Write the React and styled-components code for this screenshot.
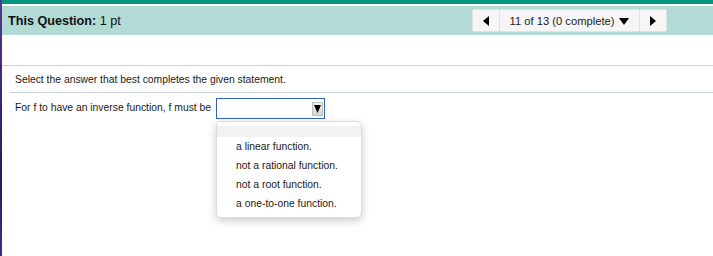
import styled, { createGlobalStyle } from "styled-components";

const GlobalStyle = createGlobalStyle`
  html, body {
    margin: 0;
    padding: 0;
    background: #ffffff;
  }
  body {
    width: 713px;
    height: 256px;
    overflow: hidden;
    font-family: "Liberation Sans", Arial, Helvetica, sans-serif;
    color: #1a1a1a;
  }
`;

const options = [
  "a linear function.",
  "not a rational function.",
  "not a root function.",
  "a one-to-one function.",
];

const Triangle = ({ dir = "down", w = 7, h = 6 }) => {
  const points = {
    down: `0,0 ${w},0 ${w / 2},${h}`,
    left: `${w},0 ${w},${h} 0,${h / 2}`,
    right: `0,0 0,${h} ${w},${h / 2}`,
  }[dir];
  return (
    <svg width={w} height={h} viewBox={`0 0 ${w} ${h}`}>
      <polygon points={points} fill="#000" />
    </svg>
  );
};

export default function App() {
  return (
    <>
      <GlobalStyle />
      <Page>
        <Strip />
        <Main>
          <TopBar />
          <Header>
            <Title>
              <b>This Question:</b> 1 pt
            </Title>
            <Nav>
              <NavButton $w={28}>
                <Triangle dir="left" w={6} h={10} />
              </NavButton>
              <NavButton $w={141} $counter>
                11 of 13 (0 complete)
                <Triangle dir="down" w={10} h={7} />
              </NavButton>
              <NavButton $w={28}>
                <Triangle dir="right" w={6} h={10} />
              </NavButton>
            </Nav>
          </Header>
          <Spacer />
          <Divider />
          <Instruction>Select the answer that best completes the given statement.</Instruction>
          <Divider $inset />
          <QuestionRow>
            <Label>For f to have an inverse function, f must be</Label>
            <SelectWrap>
              <SelectBox>
                <ArrowButton>
                  <Triangle dir="down" w={7} h={8} />
                </ArrowButton>
              </SelectBox>
              <Menu>
                <EmptyOption />
                {options.map((o) => (
                  <Option key={o}>{o}</Option>
                ))}
              </Menu>
            </SelectWrap>
          </QuestionRow>
        </Main>
      </Page>
    </>
  );
}

const Page = styled.div`
  display: flex;
  width: 713px;
  height: 256px;
`;

const Strip = styled.div`
  width: 2px;
  flex-shrink: 0;
  background: linear-gradient(180deg, #5a3790 0%, #3f2170 40%, #2c1658 70%, #4a2a80 100%);
`;

const Main = styled.div`
  flex: 1;
  display: flex;
  flex-direction: column;
  position: relative;
`;

const TopBar = styled.div`
  height: 4px;
  background: #00977f;
  border-bottom: 2px solid #ffffff;
`;

const Header = styled.div`
  height: 29px;
  background: #b2dbd5;
  display: flex;
  align-items: center;
  justify-content: space-between;
  padding: 0 46px 0 6px;
`;

const Title = styled.div`
  font-size: 12.6px;
  color: #111;
  b {
    font-weight: bold;
  }
`;

const Nav = styled.div`
  display: flex;
  height: 23px;
`;

const NavButton = styled.div`
  width: ${(p) => p.$w}px;
  height: 23px;
  box-sizing: border-box;
  background: #f6f6f6;
  border: 1px solid #e2e2e2;
  border-radius: 2px;
  display: flex;
  align-items: center;
  justify-content: center;
  gap: 5px;
  font-size: 11.2px;
  color: #222;
  padding-top: ${(p) => (p.$counter ? "0" : "1px")};
  & + & {
    margin-left: -1px;
  }
  svg {
    margin-top: ${(p) => (p.$counter ? "2px" : "0")};
  }
`;

const Spacer = styled.div`
  height: 30px;
`;

const Divider = styled.div`
  height: 1px;
  background: #cbd1dd;
  margin-left: ${(p) => (p.$inset ? "8px" : "0")};
`;

const Instruction = styled.div`
  font-size: 10.35px;
  line-height: 14px;
  padding: 7px 0 5px 13px;
`;

const QuestionRow = styled.div`
  display: flex;
  align-items: center;
  padding: 5px 0 0 13px;
  gap: 5px;
`;

const Label = styled.span`
  font-size: 10.35px;
  line-height: 14px;
  padding-bottom: 2px;
`;

const SelectWrap = styled.div`
  position: relative;
`;

const SelectBox = styled.div`
  width: 109px;
  height: 21px;
  box-sizing: border-box;
  border: 1px solid #2f62c9;
  background: #fff;
  display: flex;
  align-items: flex-start;
  justify-content: flex-end;
  padding: 3px 1px 0 0;
`;

const ArrowButton = styled.div`
  width: 11px;
  height: 14px;
  box-sizing: border-box;
  background: linear-gradient(180deg, #f2f2f2, #d6d6d6);
  border: 1px solid #bdbdbd;
  display: flex;
  align-items: center;
  justify-content: center;
  svg {
    margin-top: -1px;
  }
`;

const Menu = styled.div`
  position: absolute;
  left: 0;
  top: 23px;
  width: 146px;
  box-sizing: border-box;
  padding: 4px 0 4px;
  background: #fff;
  border: 1px solid #dcdcdc;
  border-radius: 5px;
  box-shadow: 0 3px 8px rgba(0, 0, 0, 0.2);
`;

const EmptyOption = styled.div`
  height: 11px;
  background: #f2f2f2;
`;

const Option = styled.div`
  height: 19px;
  line-height: 19px;
  padding-left: 19px;
  font-size: 10.35px;
  color: #1a1a1a;
  white-space: nowrap;
`;
